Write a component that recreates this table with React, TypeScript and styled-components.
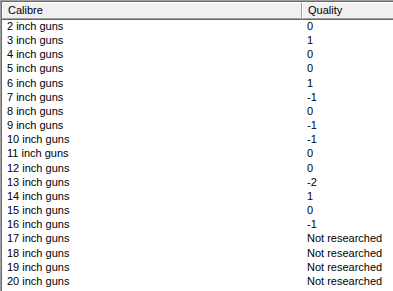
import styled, { createGlobalStyle } from "styled-components"

const rows: [string, string][] = [
  ["2 inch guns", "0"],
  ["3 inch guns", "1"],
  ["4 inch guns", "0"],
  ["5 inch guns", "0"],
  ["6 inch guns", "1"],
  ["7 inch guns", "-1"],
  ["8 inch guns", "0"],
  ["9 inch guns", "-1"],
  ["10 inch guns", "-1"],
  ["11 inch guns", "0"],
  ["12 inch guns", "0"],
  ["13 inch guns", "-2"],
  ["14 inch guns", "1"],
  ["15 inch guns", "0"],
  ["16 inch guns", "-1"],
  ["17 inch guns", "Not researched"],
  ["18 inch guns", "Not researched"],
  ["19 inch guns", "Not researched"],
  ["20 inch guns", "Not researched"],
]

const App = () => {
  return (
    <>
      <Global />
      <Frame>
        <Inner>
          <HeaderRow>
            <HeaderCell w="300px">Calibre</HeaderCell>
            <HeaderCell w="auto" grow>Quality</HeaderCell>
          </HeaderRow>
          <Body>
            {rows.map(([cal, q]) => (
              <Row key={cal}>
                <Cell w="300px">{cal}</Cell>
                <Cell w="auto">{q}</Cell>
              </Row>
            ))}
          </Body>
        </Inner>
      </Frame>
    </>
  )
}

export default App

const Global = createGlobalStyle`
  body {
    margin: 0;
    background: #ffffff;
  }
`

const Frame = styled.div`
  width: 393px;
  height: 291px;
  box-sizing: border-box;
  border-top: 1px solid #a0a0a0;
  border-left: 1px solid #a0a0a0;
  overflow: hidden;
`

const Inner = styled.div`
  height: 100%;
  border-top: 1px solid #696969;
  border-left: 1px solid #696969;
  background: #ffffff;
  font-family: "Liberation Sans", Arial, sans-serif;
  font-size: 11px;
  color: #000000;
`

const HeaderRow = styled.div`
  display: flex;
  height: 17px;
  background: #f0f0f0;
  border-bottom: 1px solid #696969;
`

const HeaderCell = styled.div<{ w: string; grow?: boolean }>`
  width: ${({ w }) => w};
  flex: ${({ grow }) => (grow ? "1" : "none")};
  box-sizing: border-box;
  height: 17px;
  line-height: 15px;
  padding-left: 5px;
  border-top: 1px solid #ffffff;
  border-left: 1px solid #ffffff;
  border-bottom: 1px solid #a0a0a0;
  border-right: ${({ grow }) => (grow ? "none" : "1px solid #a0a0a0")};
`

const Body = styled.div`
  padding-top: 0px;
`

const Row = styled.div`
  display: flex;
  height: 14.17px;
  line-height: 13px;
`

const Cell = styled.div<{ w: string }>`
  width: ${({ w }) => w};
  box-sizing: border-box;
  padding-left: 5px;
  white-space: nowrap;
`
